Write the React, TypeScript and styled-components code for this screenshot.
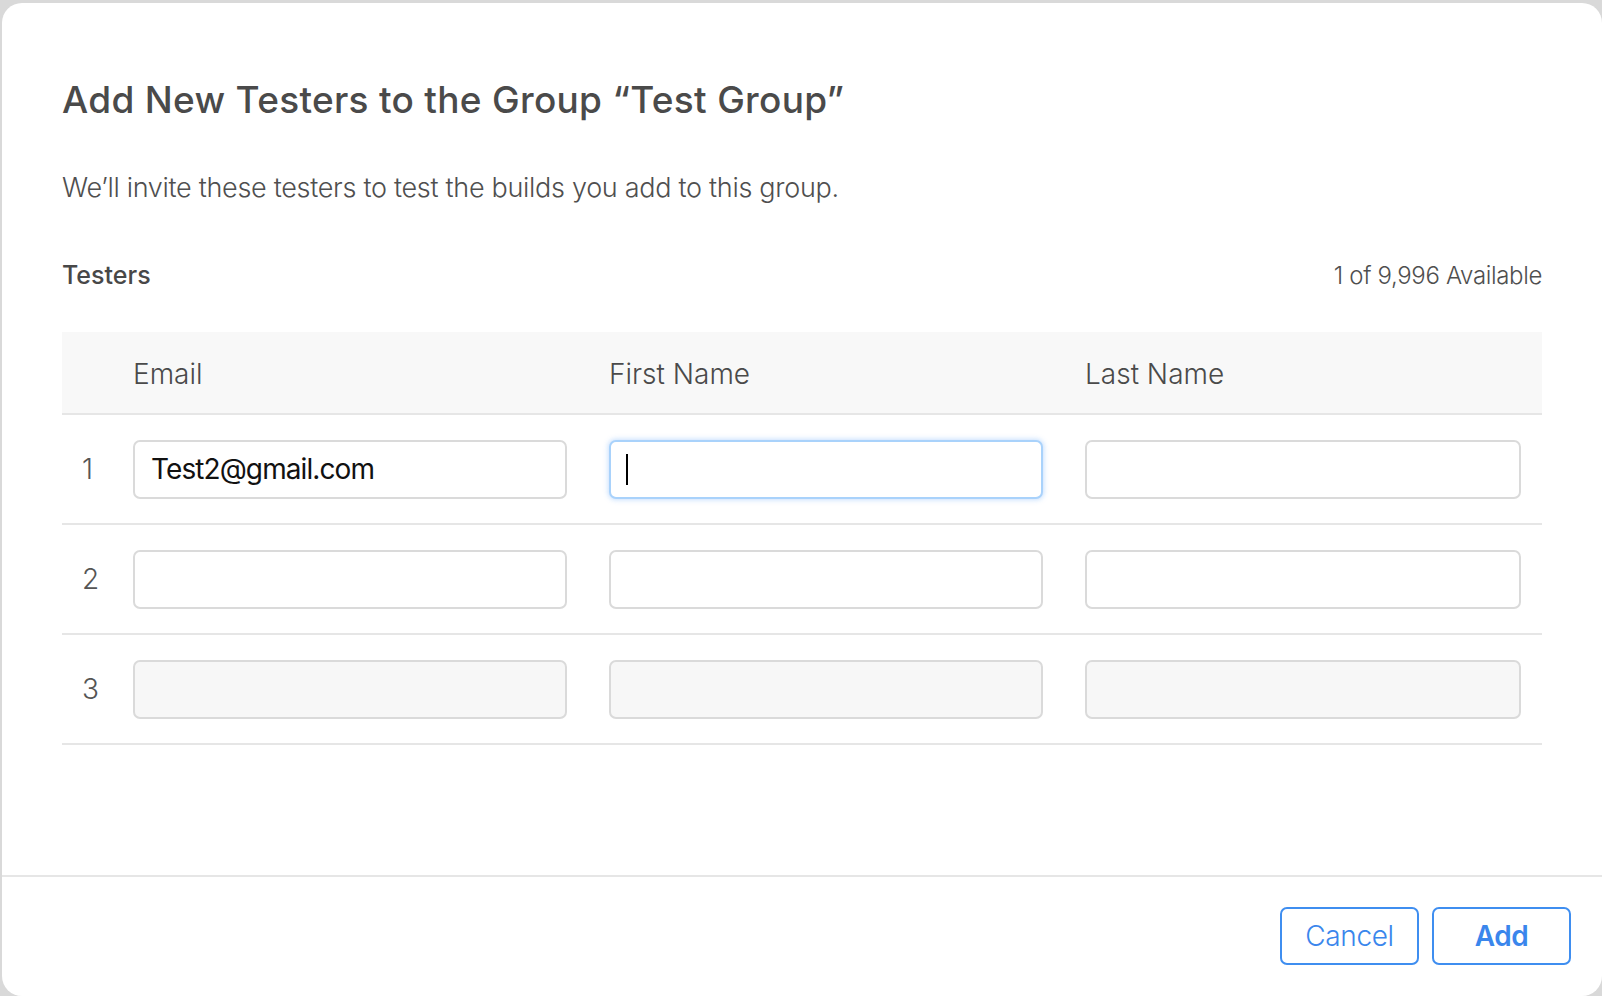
import React from "react";
import styled, { createGlobalStyle } from "styled-components";

const Global = createGlobalStyle`
  html, body { margin: 0; padding: 0; background: #d9d9d9; }
  body { font-family: "Inter", "Liberation Sans", sans-serif; -webkit-font-smoothing: antialiased; overflow: hidden; }
  * { box-sizing: border-box; }
`;

const Page = styled.div`
  width: 1602px;
  height: 996px;
  padding: 3px 0 0 2px;
`;

const Modal = styled.div`
  width: 1600px;
  height: 993px;
  background: #fff;
  border-radius: 20px;
  display: flex;
  flex-direction: column;
  overflow: hidden;
`;

const Body = styled.div`
  flex: 1;
  padding: 75px 60px 0 60px;
  display: flex;
  flex-direction: column;
`;

const Title = styled.h1`
  margin: 0;
  font-size: 37px;
  line-height: 44px;
  font-weight: 500;
  color: #4a4a4a;
  letter-spacing: 0.3px;
`;

const Subtitle = styled.p`
  margin: 49px 0 0 0;
  font-size: 27px;
  line-height: 34px;
  font-weight: 300;
  color: #4f4f4f;
  letter-spacing: -0.3px;
`;

const SectionHead = styled.div`
  margin-top: 55px;
  display: flex;
  justify-content: space-between;
  align-items: center;
  height: 30px;
`;

const SectionLabel = styled.div`
  font-size: 25px;
  font-weight: 500;
  color: #484848;
`;

const Available = styled.div`
  font-size: 24px;
  font-weight: 300;
  color: #4f4f4f;
  letter-spacing: -0.35px;
`;

const Table = styled.div`
  margin-top: 42px;
  display: flex;
  flex-direction: column;
`;

const Grid = styled.div<{ $head?: boolean }>`
  display: grid;
  grid-template-columns: 71px 434px 42px 434px 42px 436px 21px;
  align-items: center;
  height: ${(p) => (p.$head ? "83px" : "110px")};
  background: ${(p) => (p.$head ? "#f8f8f8" : "transparent")};
  border-bottom: 2px solid #e6e6e6;
`;

const HeadCell = styled.div<{ $col: number }>`
  grid-column: ${(p) => p.$col};
  padding-top: 2px;
  font-size: 28px;
  font-weight: 300;
  color: #4a4a4a;
  letter-spacing: 0;
`;

const RowNum = styled.div`
  grid-column: 1;
  padding-left: 20px;
  font-size: 28px;
  font-weight: 300;
  color: #555;
`;

const Field = styled.div<{ $col: number }>`
  grid-column: ${(p) => p.$col};
  position: relative;
`;

const Input = styled.input<{ $focus?: boolean }>`
  display: block;
  width: 100%;
  height: 59px;
  border-radius: 7px;
  border: 2px solid ${(p) => (p.$focus ? "#a9d2fb" : "#dadada")};
  box-shadow: ${(p) => (p.$focus ? "0 0 5px 1px rgba(130, 185, 250, 0.45)" : "none")};
  background: #fff;
  padding: 0 16px;
  font-family: "Inter", "Liberation Sans", sans-serif;
  font-size: 28px;
  font-weight: 400;
  color: #111;
  letter-spacing: -0.9px;
  outline: none;
  caret-color: transparent;
  &:disabled { background: #f7f7f7; }
`;

const Caret = styled.span`
  position: absolute;
  left: 17px;
  top: 14px;
  width: 2px;
  height: 31px;
  background: #000;
`;

const Footer = styled.div`
  border-top: 2px solid #e6e6e6;
  padding: 30px 31px 31px 0;
  display: flex;
  justify-content: flex-end;
  gap: 13px;
`;

const Button = styled.button<{ $primary?: boolean }>`
  width: 139px;
  height: 58px;
  border: 2px solid #3f8ef0;
  border-radius: 7px;
  background: #fff;
  color: #3a86ec;
  font-family: "Inter", "Liberation Sans", sans-serif;
  font-size: 28px;
  font-weight: ${(p) => (p.$primary ? 600 : 300)};
  letter-spacing: -0.4px;
  cursor: pointer;
`;

const rows = [
  { n: 1, email: "Test2@gmail.com", focusCol: 4, disabled: false },
  { n: 2, email: "", focusCol: 0, disabled: false },
  { n: 3, email: "", focusCol: 0, disabled: true },
];

export default function App() {
  return (
    <Page>
      <Global />
      <Modal>
        <Body>
          <Title>Add New Testers to the Group “Test Group”</Title>
          <Subtitle>We’ll invite these testers to test the builds you add to this group.</Subtitle>
          <SectionHead>
            <SectionLabel>Testers</SectionLabel>
            <Available>1 of 9,996 Available</Available>
          </SectionHead>
          <Table>
            <Grid $head>
              <HeadCell $col={2}>Email</HeadCell>
              <HeadCell $col={4}>First Name</HeadCell>
              <HeadCell $col={6}>Last Name</HeadCell>
            </Grid>
            {rows.map((r) => (
              <Grid key={r.n}>
                <RowNum>{r.n}</RowNum>
                {[2, 4, 6].map((c, i) => (
                  <Field $col={c} key={c}>
                    <Input
                      readOnly
                      disabled={r.disabled}
                      $focus={r.focusCol === c}
                      value={i === 0 ? r.email : ""}
                    />
                    {r.focusCol === c && <Caret />}
                  </Field>
                ))}
              </Grid>
            ))}
          </Table>
        </Body>
        <Footer>
          <Button>Cancel</Button>
          <Button $primary>Add</Button>
        </Footer>
      </Modal>
    </Page>
  );
}
